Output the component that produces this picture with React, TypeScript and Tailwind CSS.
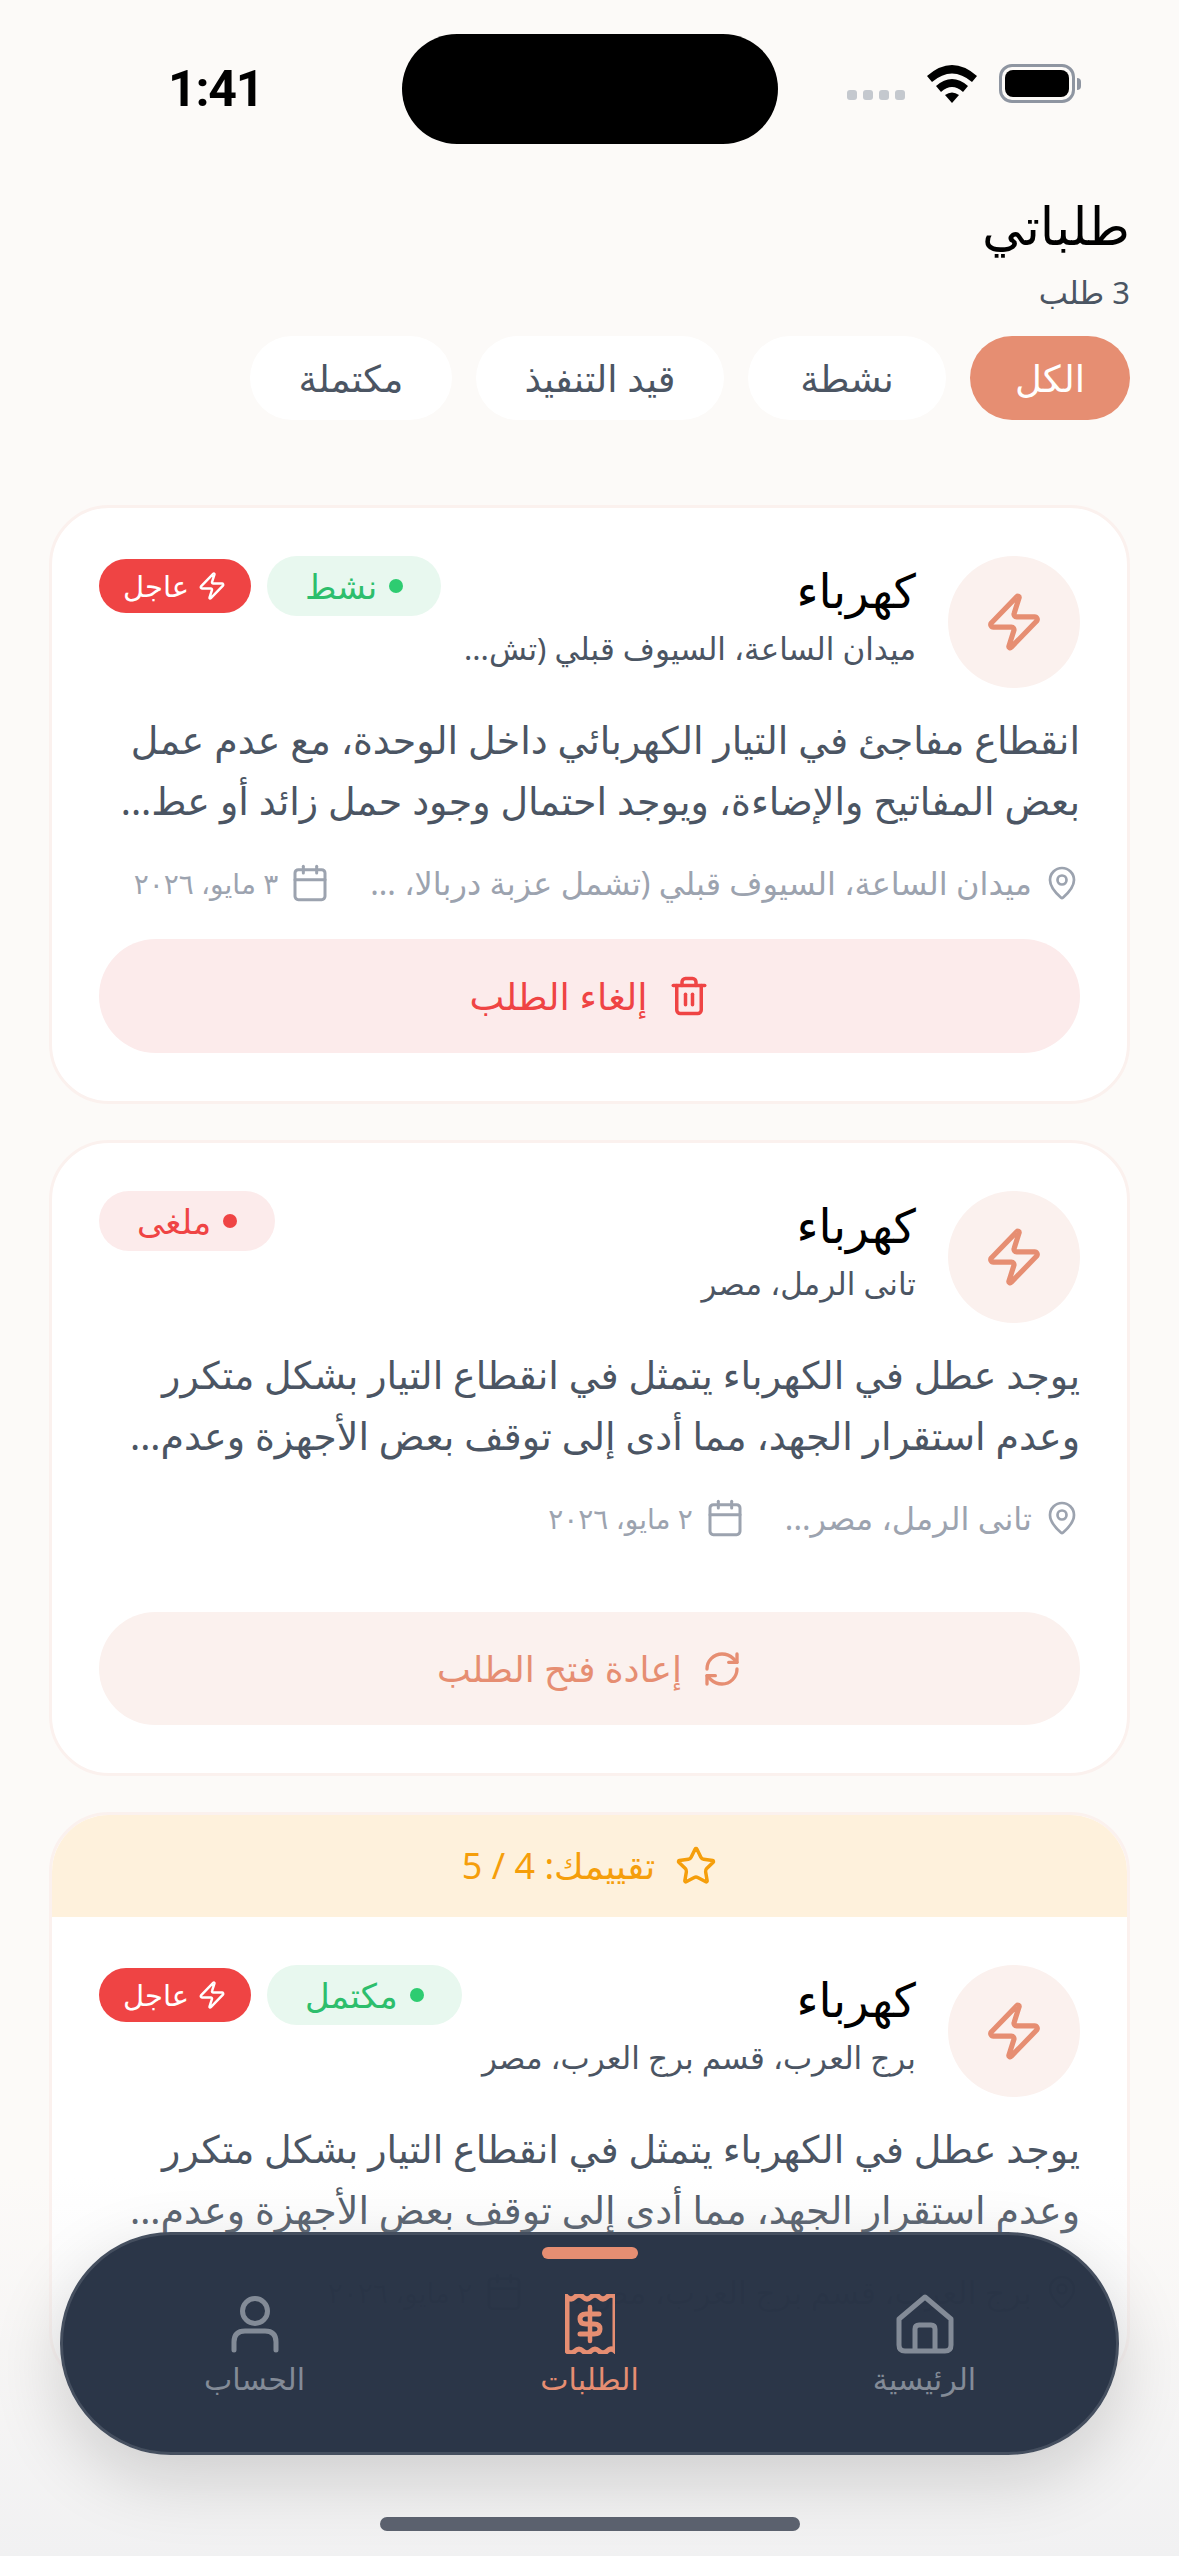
import React from 'react';
import { Calendar, MapPin, RefreshCw, Star, Trash2, Zap } from 'lucide-react';

const font = { fontFamily: '"Noto Sans", "DejaVu Sans", sans-serif' };

function HomeIcon() {
  return (
    <svg width="60" height="62" viewBox="0 0 60 62" fill="none" stroke="#838B97" strokeWidth="5" strokeLinejoin="round">
      <path d="M30 4 L56 26 V52 Q56 58 50 58 H10 Q4 58 4 52 V26 Z" />
      <path d="M20 58 V36 Q20 32 24 32 H36 Q40 32 40 36 V58" />
    </svg>
  );
}

function ReceiptIcon() {
  return (
    <svg width="50" height="60" viewBox="0 0 50 60" fill="none" stroke="#E68E72">
      <path
        d="M2 3 Q6 7 10 3 T18 3 T26 3 T34 3 T42 3 T50 3 V57 Q46 53 42 57 T34 57 T26 57 T18 57 T10 57 T2 57 Z"
        strokeWidth="5"
      />
      <path d="M25 13 V47" strokeWidth="4.5" strokeLinecap="round" />
      <path d="M34 20 H21 Q15 20 15 25 Q15 30 21 30 H29 Q35 30 35 35 Q35 40 29 40 H15" strokeWidth="5" strokeLinecap="round" />
    </svg>
  );
}

function UserIcon() {
  return (
    <svg width="48" height="58" viewBox="0 0 48 58" fill="none" stroke="#838B97" strokeWidth="5" strokeLinecap="round">
      <circle cx="24" cy="16" r="12.5" />
      <path d="M3 55 V47 Q3 36 14 36 H34 Q45 36 45 47 V55" />
    </svg>
  );
}

function StatusIcons() {
  return (
    <div className="flex items-end gap-[22px]">
      <div className="mb-[3px] flex gap-1.5">
        <span className="h-2.5 w-2.5 rounded-[3px] bg-[#C4C8CE]" />
        <span className="h-2.5 w-2.5 rounded-[3px] bg-[#C4C8CE]" />
        <span className="h-2.5 w-2.5 rounded-[3px] bg-[#C4C8CE]" />
        <span className="h-2.5 w-2.5 rounded-[3px] bg-[#C4C8CE]" />
      </div>
      <svg width="50" height="38" viewBox="0 0 50 38">
        <path d="M0 11 Q25 -11 50 11 L45 17 Q25 0 5 17 Z" fill="#000" />
        <path d="M9 21 Q25 7 41 21 L36 27 Q25 17 14 27 Z" fill="#000" />
        <path d="M18 30 Q25 25 32 30 L25 38 Z" fill="#000" />
      </svg>
      <div className="flex items-center">
        <div className="flex h-[39px] w-[76px] items-center justify-center rounded-[13px] border-[3px] border-[#8E95A1]">
          <span className="h-[27px] w-[64px] rounded-[8px] bg-black" />
        </div>
        <span className="ml-0.5 h-3 w-1 rounded-r-full bg-[#8E95A1]" />
      </div>
    </div>
  );
}

function Badge({ label, dot, bg, text }: { label: string; dot: string; bg: string; text: string }) {
  return (
    <span className={`flex h-[60px] items-center gap-3 rounded-full px-[38px] text-[34px] ${bg} ${text}`}>
      <span className={`h-3.5 w-3.5 rounded-full ${dot}`} />
      {label}
    </span>
  );
}

function Urgent() {
  return (
    <span className="flex h-[54px] items-center gap-2 rounded-full bg-[#EF4444] px-6 text-[29px] text-white">
      <Zap size={30} strokeWidth={2} />
      عاجل
    </span>
  );
}

interface RequestBodyProps {
  sub: string;
  line1: string;
  line2: string;
  place: string;
  date: string;
  badges: React.ReactNode;
  children?: React.ReactNode;
}

function RequestBody({ sub, line1, line2, place, date, badges, children }: RequestBodyProps) {
  return (
    <div className="px-[47px] pt-[48px]">
      <div className="flex items-start justify-between">
        <div className="flex items-start gap-8">
          <div className="flex h-[132px] w-[132px] items-center justify-center rounded-full bg-[#FBF1EE]">
            <Zap size={62} color="#E68E72" strokeWidth={2} />
          </div>
          <div className="pt-1">
            <div className="text-[47px] leading-[60px] text-black">كهرباء</div>
            <div className="mt-1.5 whitespace-nowrap text-[31px] leading-[44px] text-[#4B5563]">{sub}</div>
          </div>
        </div>
        <div className="flex items-center gap-4">{badges}</div>
      </div>
      <p className="mt-[21px] whitespace-nowrap text-[38px] leading-[61px] text-[#4B5563]">
        {line1}
        <br />
        {line2}
      </p>
      <div className="mt-[32px] flex h-10 items-center gap-10 text-[#9CA3AF]">
        <span className="flex items-center gap-3">
          <MapPin size={36} strokeWidth={1.8} />
          <span className="whitespace-nowrap text-[32px]">{place}</span>
        </span>
        <span className="flex items-center gap-3">
          <Calendar size={40} strokeWidth={1.8} />
          <span className="whitespace-nowrap text-[28px]">{date}</span>
        </span>
      </div>
      {children}
    </div>
  );
}

function NavItem({ label, active, children }: { label: string; active?: boolean; children: React.ReactNode }) {
  return (
    <div className={`flex w-[335px] flex-col items-center ${active ? 'text-[#E68E72]' : 'text-[#838B97]'}`}>
      <div className="flex h-[62px] items-center">{children}</div>
      <span className="mt-1 text-[30px] leading-[40px]">{label}</span>
    </div>
  );
}

export default function App() {
  return (
    <div dir="rtl" style={font} className="relative h-[2556px] w-[1179px] overflow-hidden bg-[#FCFAF8]">
      <div dir="ltr" className="flex h-[150px] items-start justify-between pl-[168px] pr-[98px] pt-[64px]">
        <span className="text-[50px] font-bold leading-[50px] tracking-tight text-black" style={{ fontFamily: 'Roboto, sans-serif' }}>
          1:41
        </span>
        <StatusIcons />
      </div>
      <div className="absolute left-[402px] top-[34px] h-[110px] w-[376px] rounded-full bg-black" />

      <div className="px-[49px] pt-[41px]">
        <h1 className="text-[52px] leading-[68px] text-black">طلباتي</h1>
        <p className="mt-[15px] text-[31px] leading-[36px] text-[#4B5563]">3 طلب</p>
        <div className="mt-[26px] flex gap-6 text-[37px]">
          <span className="flex h-[84px] w-[160px] items-center justify-center rounded-full bg-[#E68E72] text-white">الكل</span>
          <span className="flex h-[84px] w-[198px] items-center justify-center rounded-full bg-white text-[#4B5563]">نشطة</span>
          <span className="flex h-[84px] w-[248px] items-center justify-center rounded-full bg-white text-[#4B5563]">قيد التنفيذ</span>
          <span className="flex h-[84px] w-[202px] items-center justify-center rounded-full bg-white text-[#4B5563]">مكتملة</span>
        </div>
      </div>

      <div className="mt-[85px] flex flex-col gap-[36px] px-[49px]">
        <div className="rounded-[60px] border-[3px] border-[#FBF1EE] bg-white pb-[48px]">
          <RequestBody
            sub="ميدان الساعة، السيوف قبلي (تش..."
            line1="انقطاع مفاجئ في التيار الكهربائي داخل الوحدة، مع عدم عمل"
            line2="بعض المفاتيح والإضاءة، ويوجد احتمال وجود حمل زائد أو عط..."
            place="ميدان الساعة، السيوف قبلي (تشمل عزبة دربالا، ..."
            date="٣ مايو، ٢٠٢٦"
            badges={
              <>
                <Badge label="نشط" dot="bg-[#2ECC71]" bg="bg-[#E8F8EF]" text="text-[#2DBE6C]" />
                <Urgent />
              </>
            }
          >
            <button className="mt-[36px] flex h-[114px] w-full items-center justify-center gap-5 rounded-full bg-[#FCEBEB] text-[37px] text-[#EF4444]">
              <Trash2 size={42} strokeWidth={2} />
              إلغاء الطلب
            </button>
          </RequestBody>
        </div>

        <div className="rounded-[60px] border-[3px] border-[#FBF1EE] bg-white pb-[48px]">
          <RequestBody
            sub="تانى الرمل، مصر"
            line1="يوجد عطل في الكهرباء يتمثل في انقطاع التيار بشكل متكرر"
            line2="وعدم استقرار الجهد، مما أدى إلى توقف بعض الأجهزة وعدم..."
            place="تانى الرمل، مصر..."
            date="٢ مايو، ٢٠٢٦"
            badges={<Badge label="ملغى" dot="bg-[#EF4444]" bg="bg-[#FCEBEB]" text="text-[#EF4444]" />}
          >
            <button className="mt-[74px] flex h-[113px] w-full items-center justify-center gap-5 rounded-full bg-[#FBF1EE] text-[36px] text-[#E68E72]">
              <RefreshCw size={40} strokeWidth={2} />
              إعادة فتح الطلب
            </button>
          </RequestBody>
        </div>

        <div className="overflow-hidden rounded-[60px] border-[3px] border-[#FBF1EE] bg-white pb-[76px]">
          <div className="flex h-[102px] items-center justify-center gap-5 bg-[#FEF1DC] text-[36px] text-[#F59E0B]">
            <Star size={42} strokeWidth={2} />
            تقييمك: 4 / 5
          </div>
          <RequestBody
            sub="برج العرب، قسم برج العرب، مصر"
            line1="يوجد عطل في الكهرباء يتمثل في انقطاع التيار بشكل متكرر"
            line2="وعدم استقرار الجهد، مما أدى إلى توقف بعض الأجهزة وعدم..."
            place="برج العرب، قسم برج العرب، مص..."
            date="٢ مايو، ٢٠٢٦"
            badges={
              <>
                <Badge label="مكتمل" dot="bg-[#2ECC71]" bg="bg-[#E8F8EF]" text="text-[#2DBE6C]" />
                <Urgent />
              </>
            }
          />
        </div>
      </div>

      {/* fade behind the tab bar */}
      <div className="absolute inset-x-0 bottom-0 h-[380px] bg-gradient-to-b from-[#F1F1F2]/0 to-[#F1F1F2]" />

      <div
        dir="ltr"
        className="absolute left-[60px] top-[2232px] flex h-[223px] w-[1059px] justify-center rounded-[111px] border-[3px] border-[#454F5F] bg-[#243042]/97 pt-[58px] shadow-[0_24px_70px_rgba(0,0,0,0.16)]"
      >
        <span className="absolute left-[479px] top-[12px] h-3 w-[96px] rounded-full bg-[#E68E72]" />
        <NavItem label="الحساب">
          <UserIcon />
        </NavItem>
        <NavItem label="الطلبات" active>
          <ReceiptIcon />
        </NavItem>
        <NavItem label="الرئيسية">
          <HomeIcon />
        </NavItem>
      </div>

      <div className="absolute bottom-[25px] left-[380px] h-3.5 w-[420px] rounded-full bg-[#5B616E]" />
    </div>
  );
}
